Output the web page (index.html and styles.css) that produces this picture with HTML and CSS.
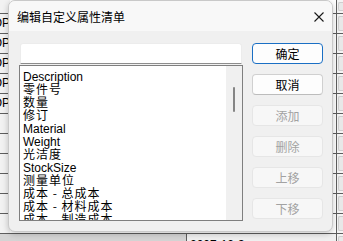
FILE: index.html
```html
<!DOCTYPE html>
<html lang="zh-CN">
<head>
    <meta charset="UTF-8">
    <title>编辑自定义属性清单</title>
    <link rel="stylesheet" href="styles.css">
</head>
<body>

<div class="desk">
    <div class="sheet">
        <div class="row first"><div class="cell-a"></div><div class="cell-m"></div><div class="cell-z"><span></span></div></div>
        <div class="row"><div class="cell-a">TOP</div><div class="cell-m"></div><div class="cell-z"><span></span></div></div>
        <div class="row"><div class="cell-a">TOP</div><div class="cell-m"></div><div class="cell-z"><span></span></div></div>
        <div class="row"><div class="cell-a">TOP</div><div class="cell-m"></div><div class="cell-z"><span></span></div></div>
        <div class="row"><div class="cell-a">TOP</div><div class="cell-m"></div><div class="cell-z"><span></span></div></div>
        <div class="row"><div class="cell-a">TOP</div><div class="cell-m"></div><div class="cell-z"><span></span></div></div>
        <div class="row"><div class="cell-a"></div><div class="cell-m"></div><div class="cell-z"><span></span></div></div>
        <div class="row"><div class="cell-a"></div><div class="cell-m"></div><div class="cell-z"><span></span></div></div>
        <div class="row"><div class="cell-a"></div><div class="cell-m"></div><div class="cell-z"><span></span></div></div>
        <div class="row"><div class="cell-a"></div><div class="cell-m"></div><div class="cell-z"><span></span></div></div>
        <div class="row"><div class="cell-a"></div><div class="cell-m"></div><div class="cell-z"><span></span></div></div>
        <div class="row"><div class="cell-a"></div><div class="cell-m"></div><div class="cell-z"><span></span></div></div>
        <div class="row last"><div class="cell-g"></div><div class="cell-date">2007-12-3</div><div class="cell-z"><span></span></div></div>
    </div>

    <div class="dialog">
        <div class="titlebar">
            <span class="title">编辑自定义属性清单</span>
            <span class="close">
                <svg width="10" height="10" viewBox="0 0 10 10"><path d="M0.5 0.5 L9.5 9.5 M9.5 0.5 L0.5 9.5" stroke="#1a1a1a" stroke-width="1.1" fill="none"/></svg>
            </span>
        </div>
        <div class="content">
            <div class="left">
                <div class="input"></div>
                <div class="listbox">
                    <div class="items">
                        <div class="item lat">Description</div>
                        <div class="item">零件号</div>
                        <div class="item">数量</div>
                        <div class="item">修订</div>
                        <div class="item lat">Material</div>
                        <div class="item lat">Weight</div>
                        <div class="item">光洁度</div>
                        <div class="item lat">StockSize</div>
                        <div class="item">测量单位</div>
                        <div class="item">成本 - 总成本</div>
                        <div class="item">成本 - 材料成本</div>
                        <div class="item">成本 - 制造成本</div>
                    </div>
                    <div class="vscroll"><span class="thumb"></span></div>
                </div>
            </div>
            <div class="buttons">
                <button class="btn default">确定</button>
                <button class="btn">取消</button>
                <button class="btn" disabled>添加</button>
                <button class="btn" disabled>删除</button>
                <button class="btn" disabled>上移</button>
                <button class="btn" disabled>下移</button>
            </div>
        </div>
    </div>
</div>

</body>
</html>
```

FILE: styles.css
```css
body {
    margin: 0;
    background: #ffffff;
    font-family: "Noto Sans CJK SC", "Liberation Sans", sans-serif;
}

.desk {
    position: relative;
    width: 343px;
    height: 241px;
    overflow: hidden;
}

/* spreadsheet behind the dialog */
.sheet {
    display: flex;
    flex-direction: column;
}

.row {
    display: flex;
    height: 20px;
    border-bottom: 1px solid #5e5e5e;
    box-sizing: border-box;
}

.row.first {
    height: 14px;
}

.cell-a {
    width: 10px;
    overflow: hidden;
    direction: rtl;
    background: #f2f2f2;
    font: 12px/19px "Liberation Sans", sans-serif;
    color: #000;
    white-space: nowrap;
}

.cell-m {
    flex: 1;
    background: #fff;
}

.cell-z {
    width: 7px;
    border-left: 1px solid #5e5e5e;
    background: #f4f4f4;
    padding: 2px 0 2px 1px;
    box-sizing: border-box;
}

.cell-z span {
    display: block;
    height: 100%;
    background: #e8e8e8;
    border: 1px solid #cfcfcf;
    border-right: none;
    border-radius: 2px 0 0 2px;
    box-sizing: border-box;
}

.row.last {
    border-bottom: none;
}

.cell-g {
    width: 186px;
    background: #d4d4d4;
}

.cell-date {
    flex: 1;
    border-left: 1px solid #5e5e5e;
    background: #f0f0f0;
    padding: 4px 0 0 3px;
    font: 12px/14px "Liberation Sans", sans-serif;
}

/* dialog window */
.dialog {
    position: absolute;
    left: 8px;
    top: 0;
    width: 325px;
    height: 232px;
    box-sizing: border-box;
    background: #f0f0f0;
    border: 1px solid #c9c9c9;
    border-radius: 7px;
    box-shadow: 0 2px 6px rgba(0, 0, 0, 0.22);
    overflow: hidden;
}

.titlebar {
    height: 30px;
    display: flex;
    align-items: center;
    justify-content: space-between;
    padding-left: 8px;
    background: #f8f8f8;
}

.title {
    font-size: 12px;
    color: #000;
}

.close {
    width: 26px;
    display: flex;
    justify-content: center;
    padding-top: 2px;
}

.content {
    display: flex;
    gap: 9px;
    padding: 12px 9px 11px 10px;
}

.left {
    width: 224px;
    display: flex;
    flex-direction: column;
    gap: 1px;
}

.input {
    height: 21px;
    margin: 0 1px;
    box-sizing: border-box;
    background: #fff;
    border: 1px solid #ececec;
    border-bottom-color: #8d8d8d;
    border-radius: 3px 3px 0 0;
}

.listbox {
    height: 156px;
    box-sizing: border-box;
    border: 1px solid #7f7f7f;
    background: #fff;
    display: flex;
    overflow: hidden;
}

.items {
    flex: 1;
    padding: 4px 0 0 3px;
    color: #000;
    white-space: nowrap;
}

.item {
    height: 13px;
    font-size: 12px;
    line-height: 11px;
    letter-spacing: 1px;
}

.item.lat {
    font-family: "Liberation Sans", sans-serif;
    line-height: 14px;
    letter-spacing: 0;
}

.vscroll {
    width: 16px;
    background: #f0f0f0;
    position: relative;
}

.thumb {
    position: absolute;
    left: 7px;
    top: 21px;
    width: 2px;
    height: 25px;
    border-radius: 1px;
    background: #858585;
}

.buttons {
    width: 71px;
    display: flex;
    flex-direction: column;
    gap: 10px;
}

.btn {
    height: 21px;
    padding: 0;
    box-sizing: border-box;
    font-family: "Noto Sans CJK SC", sans-serif;
    font-size: 12px;
    color: #000;
    background: #fdfdfd;
    border: 1px solid #d0d0d0;
    border-bottom-color: #bcbcbc;
    border-radius: 4px;
}

.btn.default {
    border: 1px solid #1a6fc4;
}

.btn:disabled {
    color: #a2a2a2;
    background: #f7f7f7;
    border-color: #e6e6e6;
}
```
